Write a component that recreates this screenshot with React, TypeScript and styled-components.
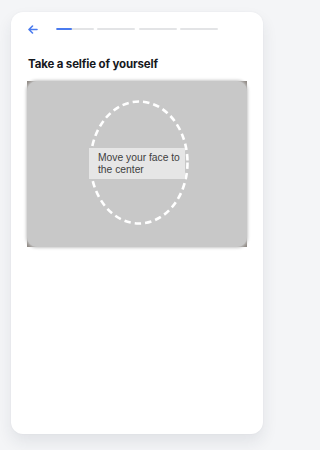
import React from "react";
import styled, { createGlobalStyle } from "styled-components";

const Global = createGlobalStyle`
  html, body { margin: 0; padding: 0; background: #f4f5f7; }
  body { font-family: Inter, "Noto Sans", sans-serif; }
`;

const Page = styled.div`
  padding: 12px 13px 16px 11px;
`;

const Card = styled.div`
  width: 252px;
  height: 422px;
  box-sizing: border-box;
  background: #ffffff;
  border-radius: 12px;
  box-shadow: 0 8px 16px rgba(30, 40, 70, 0.09), 0 0 2px rgba(30, 40, 70, 0.05);
  padding: 13px 16px 0 16px;
  display: flex;
  flex-direction: column;
`;

const HeaderRow = styled.div`
  display: flex;
  align-items: center;
  height: 8px;
`;

const Back = styled.button`
  border: none;
  background: none;
  padding: 0;
  margin: 0 0 0 1px;
  width: 10px;
  height: 8px;
  display: flex;
  align-items: center;
  justify-content: center;
  cursor: pointer;
`;

const Steps = styled.div`
  display: grid;
  grid-template-columns: repeat(4, 38px);
  column-gap: 3.3px;
  margin-left: 18px;
`;

const Step = styled.div`
  height: 2.5px;
  border-radius: 2px;
  background: #e3e4e6;
  overflow: hidden;
  & > div {
    height: 100%;
    background: #4a7bef;
    border-radius: 2px;
  }
`;

const Title = styled.h1`
  margin: 24px 0 0 1px;
  font-family: Inter, "Noto Sans", sans-serif;
  font-weight: 700;
  font-size: 11.5px;
  line-height: 14px;
  color: #16181c;
  letter-spacing: -0.15px;
`;

const Camera = styled.div`
  margin-top: 10px;
  width: 220px;
  height: 166px;
  background: #8f8984;
  position: relative;
`;

const CameraInner = styled.div`
  position: absolute;
  inset: 0;
  border-radius: 10px;
  background: #c8c8c8;
  box-shadow: 0 0 3px 1px #c8c8c8;
`;

const Oval = styled.svg`
  position: absolute;
  left: 60px;
  top: 17px;
`;

const Hint = styled.div`
  position: absolute;
  left: 62px;
  top: 67px;
  width: 96px;
  height: 31px;
  box-sizing: border-box;
  background: #e6e6e6;
  padding: 4px 0 0 9px;
  font-family: "Liberation Sans", Arial, sans-serif;
  font-size: 10.3px;
  line-height: 11.5px;
  color: #404040;
`;

export default function App() {
  return (
    <>
      <Global />
      <Page>
        <Card>
          <HeaderRow>
            <Back aria-label="Back">
              <svg width="10" height="9" viewBox="0 0 10 9" fill="none">
                <path
                  d="M9 4.5H1.3M4.5 1L1 4.5 4.5 8"
                  stroke="#4a7bef"
                  strokeWidth="1.6"
                  strokeLinecap="round"
                  strokeLinejoin="round"
                />
              </svg>
            </Back>
            <Steps>
              {[42, 0, 0, 0].map((p, i) => (
                <Step key={i}>
                  <div style={{ width: `${p}%` }} />
                </Step>
              ))}
            </Steps>
          </HeaderRow>
          <Title>Take a selfie of yourself</Title>
          <Camera>
            <CameraInner>
              <Oval width="104" height="129" viewBox="0 0 104 129">
                <ellipse
                  cx="52"
                  cy="64.5"
                  rx="48.5"
                  ry="61"
                  fill="none"
                  stroke="#ffffff"
                  strokeWidth="2.6"
                  strokeDasharray="6.5 4"
                />
              </Oval>
              <Hint>
                Move your face to
                <br />
                the center
              </Hint>
            </CameraInner>
          </Camera>
        </Card>
      </Page>
    </>
  );
}
